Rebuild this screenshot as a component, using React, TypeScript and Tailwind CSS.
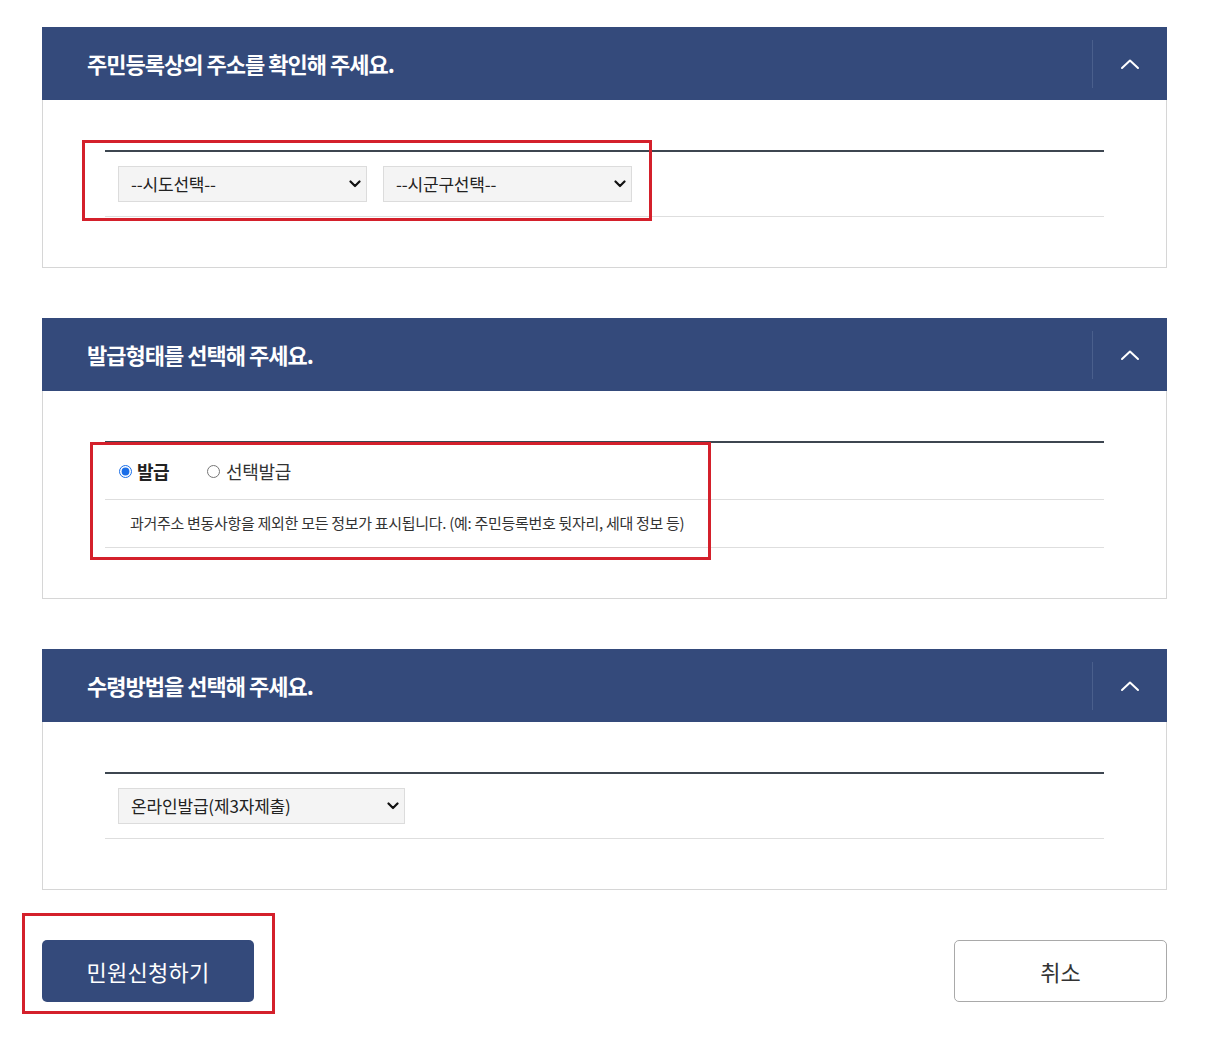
import type { ReactNode } from 'react'

const FONT = { fontFamily: '"Noto Sans CJK KR", "Noto Sans", sans-serif' }

// ─── Pieces ──────────────────────────────────────────────────────────────────

function ChevronUp() {
  return (
    <svg width="20" height="12" viewBox="0 0 20 12" fill="none">
      <path d="M2 10 L10 2.5 L18 10" stroke="#ffffff" strokeWidth="2" strokeLinecap="round" strokeLinejoin="round" />
    </svg>
  )
}

function SelectArrow() {
  return (
    <svg width="12" height="8" viewBox="0 0 12 8" fill="none" className="pointer-events-none absolute right-[5px] top-1/2 -translate-y-1/2">
      <path d="M1.5 1.5 L6 6 L10.5 1.5" stroke="#111111" strokeWidth="2.2" strokeLinecap="round" strokeLinejoin="round" />
    </svg>
  )
}

function FakeSelect({ label, width }: { label: string; width: string }) {
  return (
    <div className={`relative h-[36px] ${width} border border-[#dcdcdc] bg-[#f4f4f4] flex items-center pl-[12px]`}>
      <span className="text-[17px] text-[#222] tracking-[-0.01em]">{label}</span>
      <SelectArrow />
    </div>
  )
}

function RedBox({ className }: { className: string }) {
  return <div className={`pointer-events-none absolute border-[3px] border-[#d4202b] ${className}`} />
}

function Section({ title, children }: { title: string; children: ReactNode }) {
  return (
    <section className="w-[1125px]">
      <div className="h-[73px] bg-[#344a7b] flex items-center">
        <h2 className="flex-1 pl-[45px] text-[22px] font-bold text-white tracking-[-0.045em]">{title}</h2>
        <div className="h-[48px] w-px bg-[#4a5f8c]" />
        <div className="w-[74px] flex items-center justify-center">
          <ChevronUp />
        </div>
      </div>
      <div className="relative border border-t-0 border-[#d6d6d6] px-[62px] py-[50px]">
        {children}
      </div>
    </section>
  )
}

// ─── App ─────────────────────────────────────────────────────────────────────

export default function App() {
  return (
    <div className="min-h-[1038px] bg-white pt-[27px] pl-[42px]" style={FONT}>
      <div className="flex flex-col gap-[50px]">
        <Section title="주민등록상의 주소를 확인해 주세요.">
          <div className="border-t-2 border-[#3d4650] border-b border-b-[#dedede] py-[14px] pl-[13px] flex gap-[16px]">
            <FakeSelect label="--시도선택--" width="w-[249px]" />
            <FakeSelect label="--시군구선택--" width="w-[249px]" />
          </div>
          <RedBox className="left-[39px] top-[40px] w-[570px] h-[81px]" />
        </Section>

        <Section title="발급형태를 선택해 주세요.">
          <div className="border-t-2 border-[#3d4650]">
            <div className="h-[57px] border-b border-[#dedede] flex items-center pl-[14px] gap-[38px]">
              <label className="flex items-center gap-[5px]">
                <input type="radio" name="type" defaultChecked className="w-[13px] h-[13px] m-0 accent-[#1a6ee8]" />
                <span className="text-[18px] font-bold text-[#222] tracking-[-0.03em]">발급</span>
              </label>
              <label className="flex items-center gap-[6px]">
                <input type="radio" name="type" className="w-[13px] h-[13px] m-0" />
                <span className="text-[18px] text-[#333] tracking-[-0.02em]">선택발급</span>
              </label>
            </div>
            <div className="h-[48px] border-b border-[#dedede] flex items-center pl-[25px]">
              <p className="text-[15px] text-[#333] tracking-[-0.02em]">
                과거주소 변동사항을 제외한 모든 정보가 표시됩니다. (예: 주민등록번호 뒷자리, 세대 정보 등)
              </p>
            </div>
          </div>
          <RedBox className="left-[47px] top-[51px] w-[621px] h-[118px]" />
        </Section>

        <Section title="수령방법을 선택해 주세요.">
          <div className="border-t-2 border-[#3d4650] border-b border-b-[#dedede] py-[14px] pl-[13px] flex">
            <FakeSelect label="온라인발급(제3자제출)" width="w-[287px]" />
          </div>
        </Section>
      </div>

      <div className="w-[1125px] mt-[50px] flex justify-between items-center">
        <div className="relative">
          <button className="w-[212px] h-[62px] rounded-[5px] bg-[#344a7b] text-white text-[22px] tracking-[0.01em]">
            민원신청하기
          </button>
          <RedBox className="-left-[20px] -top-[27px] w-[253px] h-[101px]" />
        </div>
        <button className="w-[213px] h-[62px] rounded-[5px] border border-[#a9a9a9] bg-white text-[#333] text-[22px]">
          취소
        </button>
      </div>
    </div>
  )
}
